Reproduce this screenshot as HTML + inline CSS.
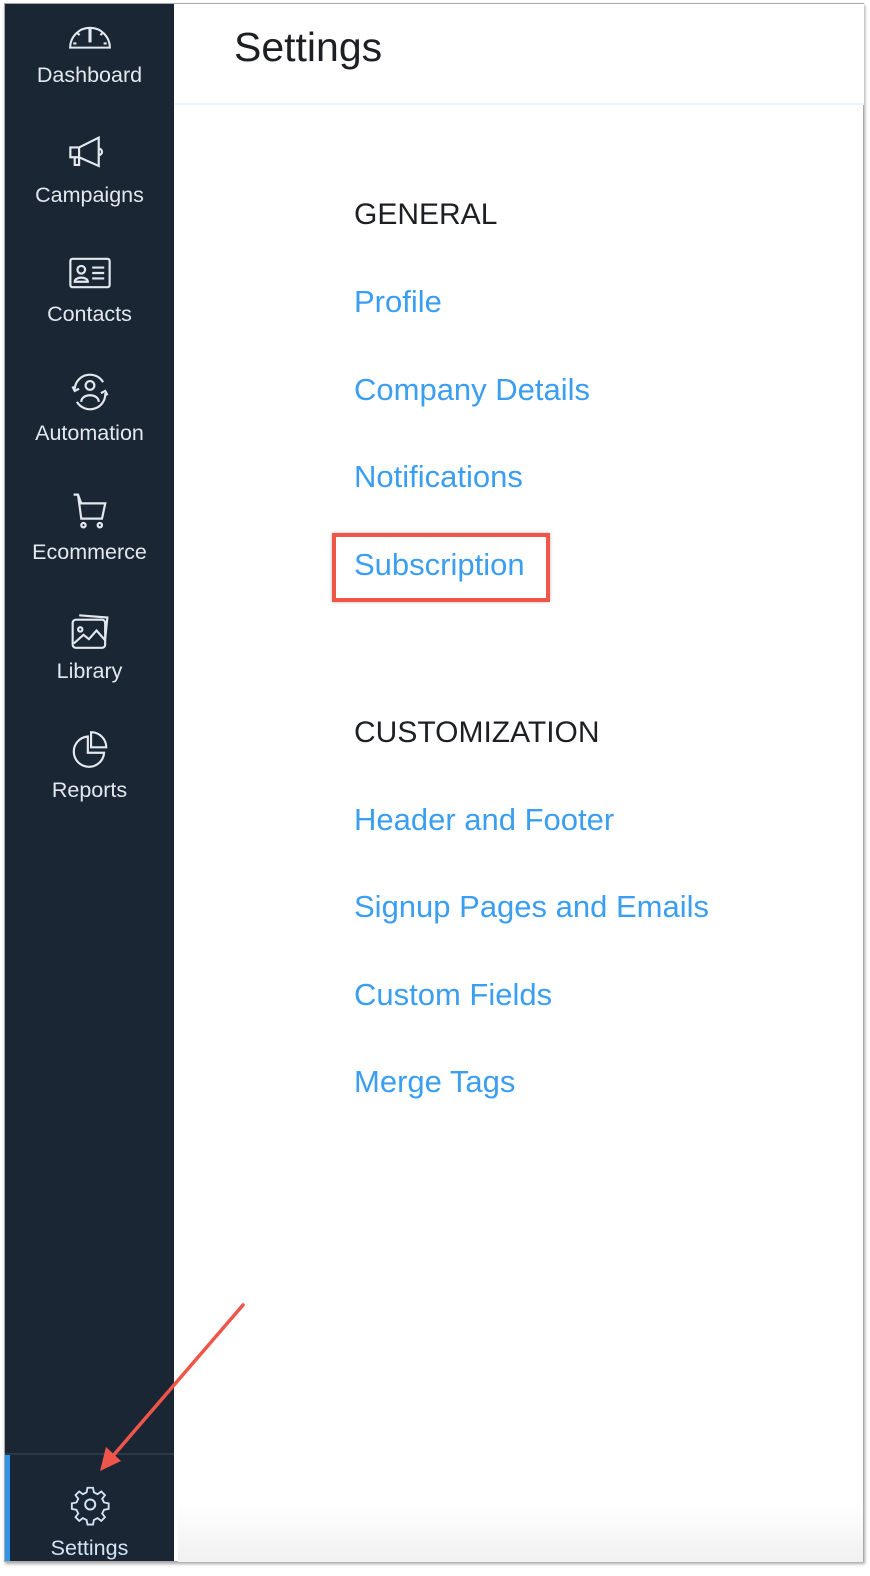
<!DOCTYPE html>
<html><head><meta charset="utf-8"><style>
html,body{margin:0;padding:0;}
body{width:870px;height:1576px;position:relative;background:#fff;overflow:hidden;font-family:"Liberation Sans",sans-serif;}
.frame{position:absolute;left:4px;top:3px;width:860px;height:1559px;border:1px solid #a9a9a9;box-shadow:1px 2px 3px rgba(0,0,0,.35);background:#fff;overflow:hidden;box-sizing:border-box;}
.main{position:absolute;background:linear-gradient(#fff 0,#fff 1500px,#f1f1f1 1555px);}
.side{position:absolute;left:5px;top:4px;width:169px;height:1557px;background:#1a2634;}
.item{position:absolute;left:0;width:169px;text-align:center;color:#e3e8ee;font-size:21.5px;}
.item svg{display:block;margin:0 auto;}
.hdr{position:absolute;left:174px;top:4px;right:6px;height:99px;border-bottom:2px solid #eef3f8;background:#fff;}
.t{position:absolute;left:234px;top:24px;font-size:41px;color:#1d1f23;}
.h{position:absolute;left:354px;font-size:30px;color:#1d1f23;}
.l{position:absolute;left:354px;font-size:31px;color:#3b9ef0;}
</style></head><body>
<div class="frame"></div>
<div class="main" style="left:178px;top:4px;right:7px;bottom:14px;"></div>
<div class="side"></div>
<div class="hdr"></div>
<div class="t">Settings</div>

<div class="item" style="top:15px;left:5px">
<svg width="46" height="36" viewBox="0 0 44 34" fill="none" stroke="#e3e8ee" stroke-width="2"><path d="M3 31 A19 19 0 0 1 41 31 Z"/><path d="M22 13 v13" stroke-width="3"/><path d="M6 27h3M35 27h3M10 17l2 2M34 17l-2 2"/></svg>
<div style="margin-top:12px">Dashboard</div></div>

<div class="item" style="top:135px;left:5px">
<svg width="48" height="38" viewBox="0 0 44 34" fill="none" stroke="#e3e8ee" stroke-width="2"><path d="M4 11h8v9H4zM12 11l18-9v26l-18-8M30 12a3 3 0 0 1 0 6M8 20v7h4v-7"/></svg>
<div style="margin-top:10px">Campaigns</div></div>

<div class="item" style="top:254px;left:5px">
<svg width="48" height="38" viewBox="0 0 44 34" fill="none" stroke="#e3e8ee" stroke-width="2"><rect x="4" y="4" width="36" height="26" rx="2"/><circle cx="14" cy="14" r="3.5"/><path d="M8 25c0-5 12-5 12 0zM24 12h11M24 17h11M24 22h11"/></svg>
<div style="margin-top:10px">Contacts</div></div>

<div class="item" style="top:373px;left:5px">
<svg width="48" height="38" viewBox="0 0 44 34" fill="none" stroke="#e3e8ee" stroke-width="2"><circle cx="22" cy="11" r="4"/><path d="M14 26c0-8 16-8 16 0M8 14a14 14 0 0 1 26-6M36 18a14 14 0 0 1-26 8M6 12l2 4 4-2M38 20l-2-4-4 2"/></svg>
<div style="margin-top:10px">Automation</div></div>

<div class="item" style="top:492px;left:5px">
<svg width="48" height="38" viewBox="0 0 44 34" fill="none" stroke="#e3e8ee" stroke-width="2"><path d="M7 2h4l3 8h22l-3 14H14L11 2"/><circle cx="16" cy="30" r="2"/><circle cx="31" cy="30" r="2"/></svg>
<div style="margin-top:10px">Ecommerce</div></div>

<div class="item" style="top:611px;left:5px">
<svg width="48" height="39" viewBox="0 0 44 36" fill="none" stroke="#e3e8ee" stroke-width="2"><rect x="6" y="8" width="30" height="26" rx="3"/><path d="M12 4l26 2-2 20"/><circle cx="13" cy="17" r="2"/><path d="M7 30l9-8 5 4 7-8 8 9"/></svg>
<div style="margin-top:9px">Library</div></div>

<div class="item" style="top:730px;left:5px">
<svg width="48" height="39" viewBox="0 0 44 36" fill="none" stroke="#e3e8ee" stroke-width="2"><path d="M20 6a14 14 0 1 0 15 15H20Z"/><path d="M23 2a14 14 0 0 1 14 14H23Z"/></svg>
<div style="margin-top:9px">Reports</div></div>

<div style="position:absolute;left:5px;top:1453px;width:169px;height:2px;background:#2c3947"></div>
<div style="position:absolute;left:5px;top:1455px;width:5px;height:106px;background:#2e95e8"></div>
<div class="item" style="top:1484px;left:5px;color:#d3e4f5">
<svg width="44" height="42" viewBox="0 0 44 40" fill="none" stroke="#d3e4f5" stroke-width="2"><path d="M19 3h6l1 5 4 2 4-3 4 4-3 4 2 4 5 1v6l-5 1-2 4 3 4-4 4-4-3-4 2-1 5h-6l-1-5-4-2-4 3-4-4 3-4-2-4-5-1v-6l5-1 2-4-3-4 4-4 4 3 4-2z" transform="translate(2,0) scale(0.92)"/><circle cx="22.2" cy="19.5" r="5"/></svg>
<div style="margin-top:10px">Settings</div></div>

<div class="h" style="top:198px">GENERAL</div>
<div class="l" style="top:284px">Profile</div>
<div class="l" style="top:372px">Company Details</div>
<div class="l" style="top:459px">Notifications</div>
<div class="l" style="top:547px">Subscription</div>
<div style="position:absolute;left:332px;top:533px;width:218px;height:69px;border:4px solid #f0554a;box-sizing:border-box;box-shadow:0 0 3px rgba(0,0,0,.3)"></div>
<div class="h" style="top:716px">CUSTOMIZATION</div>
<div class="l" style="top:802px">Header and Footer</div>
<div class="l" style="top:889px">Signup Pages and Emails</div>
<div class="l" style="top:977px">Custom Fields</div>
<div class="l" style="top:1064px">Merge Tags</div>

<svg style="position:absolute;left:0;top:0" width="870" height="1576"><line x1="243" y1="1305" x2="112" y2="1457" stroke="#f0554a" stroke-width="3.5" stroke-linecap="round"/><path d="M100 1471 L106 1447 L121 1461 Z" fill="#f0554a"/></svg>
</body></html>
